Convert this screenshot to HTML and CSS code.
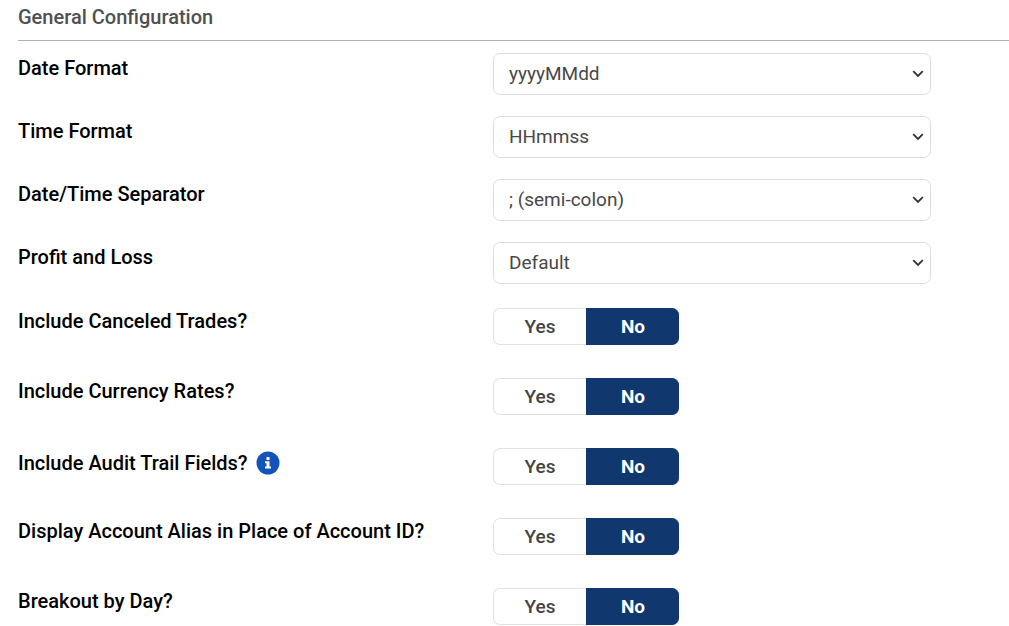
FILE: index.html
```html
<!DOCTYPE html>
<html lang="en">
<head>
<meta charset="utf-8">
<meta name="viewport" content="width=device-width, initial-scale=1">
<title>General Configuration</title>
<link rel="stylesheet" href="styles.css">
</head>
<body>
<svg class="sprite" aria-hidden="true">
  <symbol id="chevron" viewBox="0 0 12 8"><path d="M1.200 1.200 6 6l4.800-4.800" fill="none" stroke="currentColor" stroke-width="1.800"/></symbol>
</svg>
<form class="config">
  <h2 class="config-title">General Configuration</h2>

  <div class="selects">
    <div class="row">
      <label class="row-label" for="date-format">Date Format</label>
      <div class="select-box">
        <select class="select" id="date-format"><option>yyyyMMdd</option></select>
        <svg class="chevron" aria-hidden="true"><use href="#chevron"/></svg>
      </div>
    </div>
    <div class="row">
      <label class="row-label" for="time-format">Time Format</label>
      <div class="select-box">
        <select class="select" id="time-format"><option>HHmmss</option></select>
        <svg class="chevron" aria-hidden="true"><use href="#chevron"/></svg>
      </div>
    </div>
    <div class="row">
      <label class="row-label" for="separator">Date/Time Separator</label>
      <div class="select-box">
        <select class="select" id="separator"><option>; (semi-colon)</option></select>
        <svg class="chevron" aria-hidden="true"><use href="#chevron"/></svg>
      </div>
    </div>
    <div class="row">
      <label class="row-label" for="profit-loss">Profit and Loss</label>
      <div class="select-box">
        <select class="select" id="profit-loss"><option>Default</option></select>
        <svg class="chevron" aria-hidden="true"><use href="#chevron"/></svg>
      </div>
    </div>
  </div>

  <div class="toggles">
    <div class="row" role="radiogroup" aria-labelledby="canceled-label">
      <span class="row-label" id="canceled-label">Include Canceled Trades?</span>
      <div class="toggle">
        <label class="choice"><input type="radio" name="canceled" value="yes">Yes</label>
        <label class="choice"><input type="radio" name="canceled" value="no" checked>No</label>
      </div>
    </div>
    <div class="row" role="radiogroup" aria-labelledby="currency-label">
      <span class="row-label" id="currency-label">Include Currency Rates?</span>
      <div class="toggle">
        <label class="choice"><input type="radio" name="currency" value="yes">Yes</label>
        <label class="choice"><input type="radio" name="currency" value="no" checked>No</label>
      </div>
    </div>
    <div class="row" role="radiogroup" aria-labelledby="audit-label">
      <div class="row-label with-info">
        <span id="audit-label">Include Audit Trail Fields?</span>
        <button class="info" type="button" aria-label="About audit trail fields">
          <svg class="info-icon" viewBox="0 0 24 24" aria-hidden="true">
            <circle cx="12" cy="12" r="11.500" fill="#1353ba"/>
            <path d="M10.500 6h3v3h-3zM9 10.200h4.500v5.300H15v2H9v-2h1.500v-3.300H9z" fill="#fff"/>
          </svg>
        </button>
      </div>
      <div class="toggle">
        <label class="choice"><input type="radio" name="audit" value="yes">Yes</label>
        <label class="choice"><input type="radio" name="audit" value="no" checked>No</label>
      </div>
    </div>
    <div class="row" role="radiogroup" aria-labelledby="alias-label">
      <span class="row-label" id="alias-label">Display Account Alias in Place of Account ID?</span>
      <div class="toggle">
        <label class="choice"><input type="radio" name="alias" value="yes">Yes</label>
        <label class="choice"><input type="radio" name="alias" value="no" checked>No</label>
      </div>
    </div>
    <div class="row" role="radiogroup" aria-labelledby="breakout-label">
      <span class="row-label" id="breakout-label">Breakout by Day?</span>
      <div class="toggle">
        <label class="choice"><input type="radio" name="breakout" value="yes">Yes</label>
        <label class="choice"><input type="radio" name="breakout" value="no" checked>No</label>
      </div>
    </div>
  </div>
</form>
</body>
</html>
```
FILE: styles.css
```css
* {
  box-sizing: border-box;
}

body {
  margin: 0;
  background: #fff;
  color: #000;
  font: 500 20px/24px Roboto, "Liberation Sans", sans-serif;
}

.sprite {
  display: none;
}

.config {
  padding: 5px 0 0 18px;
}

.config-title {
  margin: 0;
  padding-bottom: 11px;
  border-bottom: 1px solid #b0b0b0;
  color: #505050;
  font-size: 20px;
  font-weight: 500;
}

.selects {
  display: grid;
  gap: 21px;
  padding-top: 12px;
}

.toggles {
  display: grid;
  gap: 33px;
  padding-top: 24px;
}

.row {
  display: grid;
  grid-template-columns: 475fr 438fr 78fr;
  align-items: start;
}

.row-label {
  padding-top: 3px;
}

.toggles .row-label {
  padding-top: 1px;
}

.with-info {
  display: flex;
  align-items: center;
  gap: 8px;
}

.toggles .with-info {
  padding-top: 3px;
}

.info {
  display: flex;
  padding: 0;
  border: 0;
  background: none;
  cursor: pointer;
}

.info-icon {
  width: 24px;
  height: 24px;
}

.select-box {
  position: relative;
}

.select {
  display: block;
  width: 100%;
  height: 42px;
  padding: 0 32px 1px 15px;
  border: 1px solid #dedede;
  border-radius: 7px;
  background: #fff;
  color: #484848;
  font: 400 19px/24px Roboto, "Liberation Sans", sans-serif;
  appearance: none;
}

.chevron {
  position: absolute;
  top: 17px;
  right: 7px;
  width: 12px;
  height: 8px;
  color: #333;
  pointer-events: none;
}

.toggle {
  display: flex;
  width: 186px;
}

.choice {
  flex: 1;
  height: 37px;
  padding-top: 6px;
  border: 1px solid #e2e2e2;
  border-right: 0;
  border-radius: 7px 0 0 7px;
  color: #444;
  font-size: 19px;
  text-align: center;
  cursor: pointer;
}

.choice + .choice {
  border-radius: 0 7px 7px 0;
}

.choice:has(:checked) {
  border-color: #10386e;
  background: #10386e;
  color: #fff;
  font-weight: 700;
}

.choice input {
  position: absolute;
  opacity: 0;
  pointer-events: none;
}

.choice:has(:focus-visible) {
  outline: 2px solid #1353ba;
}
```
